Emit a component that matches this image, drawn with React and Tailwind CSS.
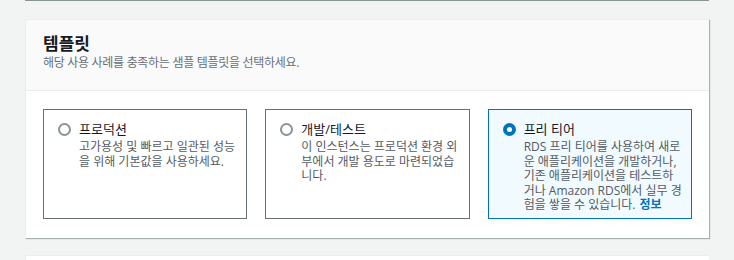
import React, { useState } from "react";

const templates = [
  {
    id: "production",
    label: "프로덕션",
    desc: "고가용성 및 빠르고 일관된 성능을 위해 기본값을 사용하세요.",
  },
  {
    id: "devtest",
    label: "개발/테스트",
    desc: "이 인스턴스는 프로덕션 환경 외부에서 개발 용도로 마련되었습니다.",
  },
  {
    id: "freetier",
    label: "프리 티어",
    desc: "RDS 프리 티어를 사용하여 새로운 애플리케이션을 개발하거나, 기존 애플리케이션을 테스트하거나 Amazon RDS에서 실무 경험을 쌓을 수 있습니다.",
    info: true,
  },
];

const Radio = ({ checked }) =>
  checked ? (
    <span className="mt-[3px] flex h-[13px] w-[13px] shrink-0 items-center justify-center rounded-full bg-[#0073bb]">
      <span className="h-[5px] w-[5px] rounded-full bg-white" />
    </span>
  ) : (
    <span className="mt-[3px] h-[13px] w-[13px] shrink-0 rounded-full border-2 border-[#879596] bg-white" />
  );

const App = () => {
  const [selected, setSelected] = useState("freetier");

  return (
    <div
      className="flex h-[260px] w-[734px] flex-col overflow-hidden bg-[#f2f3f3] pl-[25px]"
      style={{ fontFamily: '"Open Sans", "Noto Sans CJK KR", sans-serif' }}
    >
      {/* bottom edge of the previous panel */}
      <div className="h-px w-[684px] shrink-0 bg-[#879596]" />

      <div className="mt-[18px] w-[684px] shrink-0 border-t border-l border-[#eaeded] bg-white shadow-[1px_1px_1px_0_rgba(0,28,36,0.3)]">
        <div className="border-b border-[#eaeded] bg-[#fafafa] px-[17px] pt-[13px] pb-[19px]">
          <h2 className="text-[17px] leading-[22px] font-bold text-[#16191f]">템플릿</h2>
          <p className="text-[12px] leading-[16px] tracking-[-0.3px] text-[#687078]">
            해당 사용 사례를 충족하는 샘플 템플릿을 선택하세요.
          </p>
        </div>

        <div className="grid grid-cols-3 gap-[18px] px-[17px] pt-[18px] pb-[19px]">
          {templates.map((t) => {
            const active = selected === t.id;
            return (
              <label
                key={t.id}
                onClick={() => setSelected(t.id)}
                className={`flex h-[110px] cursor-pointer gap-[8px] border pt-[10px] pr-[9px] pl-[14px] ${
                  active ? "border-[#0073bb] bg-[#f1faff]" : "border-[#687078] bg-white"
                }`}
              >
                <Radio checked={active} />
                <div className="min-w-0">
                  <div className="text-[13px] leading-[18px] text-[#16191f]">{t.label}</div>
                  <p className="mt-[2px] text-[12px] leading-[14.5px] text-[#545b64]">
                    {t.desc}
                    {t.info && (
                      <a className="ml-[4px] inline-block leading-[14.5px] font-bold text-[#0073bb]">정보</a>
                    )}
                  </p>
                </div>
              </label>
            );
          })}
        </div>
      </div>

      <div className="mt-[17px] h-[20px] w-[684px] shrink-0 border-t border-l border-[#eaeded] bg-white" />
    </div>
  );
};

export default App;
